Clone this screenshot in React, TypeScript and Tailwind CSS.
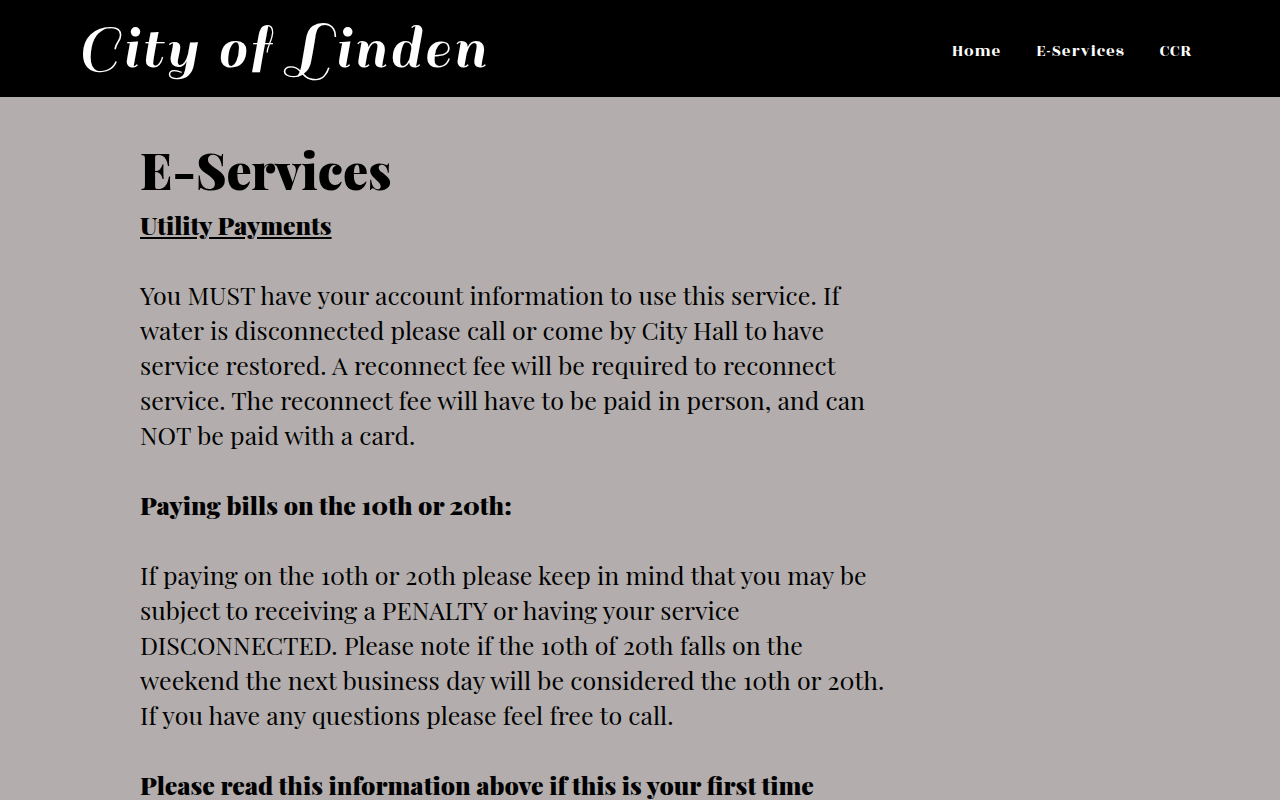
const links = [
  { label: "Home", href: "#home" },
  { label: "E-Services", href: "#e-services" },
  { label: "CCR", href: "#ccr" },
];

export default function App() {
  return (
    <div className="min-h-screen bg-[#b3aead] font-['Playfair_Display','Liberation_Serif',serif] text-black">
      <header className="flex h-[97px] items-center justify-between bg-black pr-22 pl-[77px] text-white">
        <a href="#home" className="font-['Sail','Playfair_Display',cursive] text-[65px] leading-[80px] tracking-wider">
          City of Linden
        </a>
        <nav className="flex gap-[35px] pt-[7px] font-['Rozha_One','Playfair_Display',serif] text-[17px] tracking-wider">
          {links.map((l) => (
            <a key={l.label} href={l.href}>{l.label}</a>
          ))}
        </nav>
      </header>
      <main className="max-w-[900px] pt-[43px] pl-35 text-[25px] leading-[35px]">
        <h1 className="text-[50px] leading-[60px] font-black">E-Services</h1>
        <h2 className="mt-[7px] font-black underline">Utility Payments</h2>
        <p className="mt-[35px]">
          You MUST have your account information to use this service. If
          water is disconnected please call or come by City Hall to have
          service restored. A reconnect fee will be required to reconnect
          service. The reconnect fee will have to be paid in person, and can
          NOT be paid with a card.
        </p>
        <h3 className="mt-[35px] font-black">Paying bills on the 10th or 20th:</h3>
        <p className="mt-[35px]">
          If paying on the 10th or 20th please keep in mind that you may be
          subject to receiving a PENALTY or having your service
          DISCONNECTED. Please note if the 10th of 20th falls on the
          weekend the next business day will be considered the 10th or 20th.
          If you have any questions please feel free to call.
        </p>
        <h3 className="mt-[35px] font-black">Please read this information above if this is your first time</h3>
      </main>
    </div>
  );
}
